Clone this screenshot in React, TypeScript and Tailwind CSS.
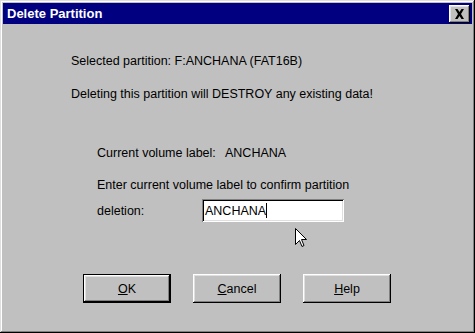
import React from "react";

const bevel =
  "shadow-[inset_-1px_-1px_0_#000,inset_1px_1px_0_#fff,inset_-2px_-2px_0_#808080,inset_2px_2px_0_#dfdfdf]";

function Btn({ children, def }: { children: React.ReactNode; def?: boolean }) {
  return (
    <div
      className={
        "w-[88px] h-[29px] bg-[#c0c0c0] flex items-center justify-center text-[12.5px] text-black " +
        (def ? "border border-black" : "")
      }
    >
      <div className={"w-full h-full flex items-center justify-center " + bevel}>{children}</div>
    </div>
  );
}

export default function App() {
  return (
    <div
      className="w-[475px] h-[333px] bg-[#c0c0c0] p-[3px] flex flex-col text-black shadow-[inset_-1px_-1px_0_#000,inset_1px_1px_0_#dfdfdf,inset_-2px_-2px_0_#808080,inset_2px_2px_0_#fff]"
      style={{ fontFamily: '"Liberation Sans", Arial, sans-serif' }}
    >
      <div className="h-[21px] bg-[#000080] flex items-center justify-between pl-[4px] pr-[2px]">
        <span className="text-white font-bold text-[13px] leading-[16px]">Delete Partition</span>
        <div className={"w-[21px] h-[18px] bg-[#c0c0c0] flex items-center justify-center " + bevel}>
          <svg width="11" height="10" viewBox="0 0 11 10">
            <path d="M1 0h2.5l2 3 2-3H10L7 5l3 5H7.5l-2-3-2 3H1l3-5z" fill="#000" />
          </svg>
        </div>
      </div>
      <div className="relative flex-1 flex flex-col text-[12.5px] leading-[16px]">
        <p className="mt-[29px] ml-[68px]">Selected partition: F:ANCHANA (FAT16B)</p>
        <p className="mt-[17px] ml-[68px]">Deleting this partition will DESTROY any existing data!</p>
        <div className="mt-[43px] ml-[94px] flex">
          <span className="w-[128px]">Current volume label:</span>
          <span>ANCHANA</span>
        </div>
        <p className="mt-[16px] ml-[94px]">Enter current volume label to confirm partition</p>
        <div className="mt-[6px] ml-[94px] flex items-center h-[23px]">
          <span className="w-[105px]">deletion:</span>
          <div className="w-[142px] h-[23px] bg-white pl-[3px] flex items-center shadow-[inset_1px_1px_0_#808080,inset_-1px_-1px_0_#fff,inset_2px_2px_0_#000,inset_-2px_-2px_0_#dfdfdf]">
            <span>ANCHANA</span>
            <span className="w-[1px] h-[15px] bg-black"></span>
          </div>
        </div>
        <div className="mt-[52px] ml-[80px] flex gap-[22px]">
          <Btn def>
            <span>
              <span className="underline">O</span>K
            </span>
          </Btn>
          <Btn>
            <span>
              <span className="underline">C</span>ancel
            </span>
          </Btn>
          <Btn>
            <span>
              <span className="underline">H</span>elp
            </span>
          </Btn>
        </div>
        <svg
          className="absolute left-[292px] top-[204px]"
          width="12"
          height="19"
          viewBox="0 0 12 19"
        >
          <path
            d="M0.5 0.5V16.5L4.5 12.5L7 18.5L9 17.5L6.5 11.5H11.5Z"
            fill="#fff"
            stroke="#000"
            strokeWidth="1"
          />
        </svg>
      </div>
    </div>
  );
}
